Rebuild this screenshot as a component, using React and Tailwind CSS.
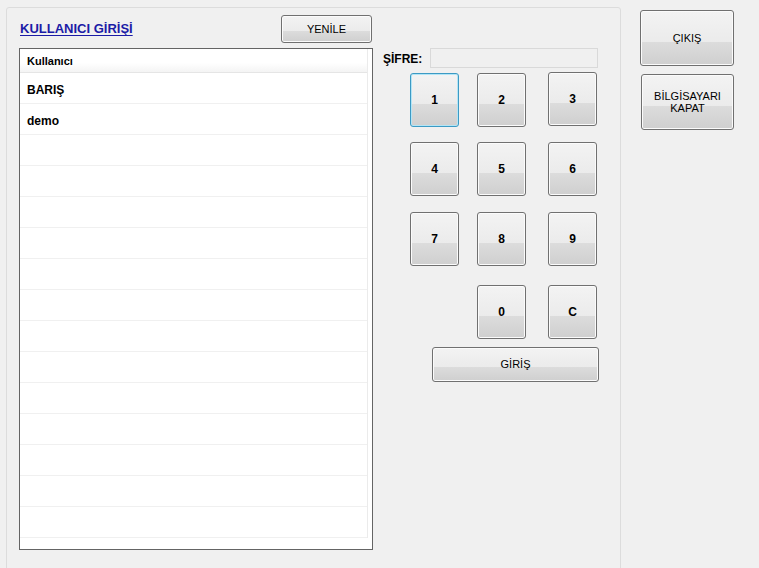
import React from 'react';

const btn =
  'border border-[#707070] rounded-[3px] bg-[linear-gradient(to_bottom,#f3f3f3_0%,#ebebeb_58%,#dcdcdc_58%,#cfcfcf_100%)] shadow-[inset_0_0_0_1px_#fbfbfb] text-black flex items-center justify-center';

const focusBtn =
  'border border-[#3c9ac4] rounded-[3px] bg-[linear-gradient(to_bottom,#f3f3f3_0%,#ebebeb_58%,#dcdcdc_58%,#cfcfcf_100%)] shadow-[inset_0_0_0_1px_#b3e5f6] text-black flex items-center justify-center';

const Key = ({ label, focused, className = '' }) => (
  <button className={`${focused ? focusBtn : btn} w-[49px] h-[54px] text-[12px] font-bold ${className}`}>
    {label}
  </button>
);

const App = () => {
  const users = ['BARIŞ', 'demo'];
  const rows = Array.from({ length: 15 }, (_, i) => users[i] || '');

  return (
    <div className="w-[759px] h-[568px] bg-[#f0f0f0] flex overflow-hidden font-['Liberation_Sans',Arial,sans-serif]">
      {/* Ana panel */}
      <div className="ml-[6px] mt-[7px] w-[615px] h-[600px] border border-[#dcdcdc] rounded-[3px] flex pl-[12px] pt-[7px]">
        {/* Sol: kullanıcı listesi */}
        <div className="w-[354px] flex flex-col">
          <div className="h-[28px] flex items-center justify-between">
            <span className="pl-[1px] text-[13px] font-bold text-[#1b1ba6] underline underline-offset-2">
              KULLANICI GİRİŞİ
            </span>
            <button className={`${btn} w-[91px] h-[28px] mr-[1px] text-[11px]`}>YENİLE</button>
          </div>
          <div className="mt-[5px] h-[502px] bg-white border border-[#646464] overflow-hidden">
            <div className="w-[348px] border-r border-[#ebebeb]">
              <div className="h-[24px] flex items-center pl-[7px] pt-[1px] text-[11px] font-bold bg-[linear-gradient(to_bottom,#ffffff_0%,#ffffff_60%,#f4f4f4_100%)] border-b border-[#e5e5e5]">
                Kullanıcı
              </div>
              {rows.map((name, i) => (
                <div key={i} className="h-[31px] flex items-center pl-[7px] pt-[3px] text-[12px] font-bold border-b border-[#f0f0f0]">
                  {name}
                </div>
              ))}
            </div>
          </div>
        </div>

        {/* Sağ: şifre ve tuş takımı */}
        <div className="ml-[10px] w-[216px] flex flex-col pt-[33px]">
          <div className="flex items-center h-[20px]">
            <span className="text-[12px] font-bold w-[47px] pt-[2px]">ŞİFRE:</span>
            <div className="w-[168px] h-[20px] border border-[#d9d9d9] bg-[#f0f0f0]" />
          </div>
          <div className="flex mt-[5px]">
            <Key label="1" focused className="ml-[27px]" />
            <Key label="2" className="ml-[18px]" />
            <Key label="3" className="ml-[22px] -mt-px" />
          </div>
          <div className="flex mt-[15px]">
            <Key label="4" className="ml-[27px]" />
            <Key label="5" className="ml-[18px]" />
            <Key label="6" className="ml-[22px]" />
          </div>
          <div className="flex mt-[16px]">
            <Key label="7" className="ml-[27px]" />
            <Key label="8" className="ml-[18px]" />
            <Key label="9" className="ml-[22px]" />
          </div>
          <div className="flex mt-[19px]">
            <Key label="0" className="ml-[94px]" />
            <Key label="C" className="ml-[22px]" />
          </div>
          <button className={`${btn} ml-[49px] mt-[8px] w-[167px] h-[35px] text-[11px]`}>GİRİŞ</button>
        </div>
      </div>

      {/* En sağ butonlar */}
      <div className="ml-[19px] mt-[10px] flex flex-col">
        <button className={`${btn} w-[94px] h-[56px] text-[11px]`}>ÇIKIŞ</button>
        <button className={`${btn} ml-[1px] mt-[8px] w-[93px] h-[56px] text-[11px] leading-[12px] flex-col`}>
          <span>BİLGİSAYARI</span>
          <span>KAPAT</span>
        </button>
      </div>
    </div>
  );
};

export default App;
